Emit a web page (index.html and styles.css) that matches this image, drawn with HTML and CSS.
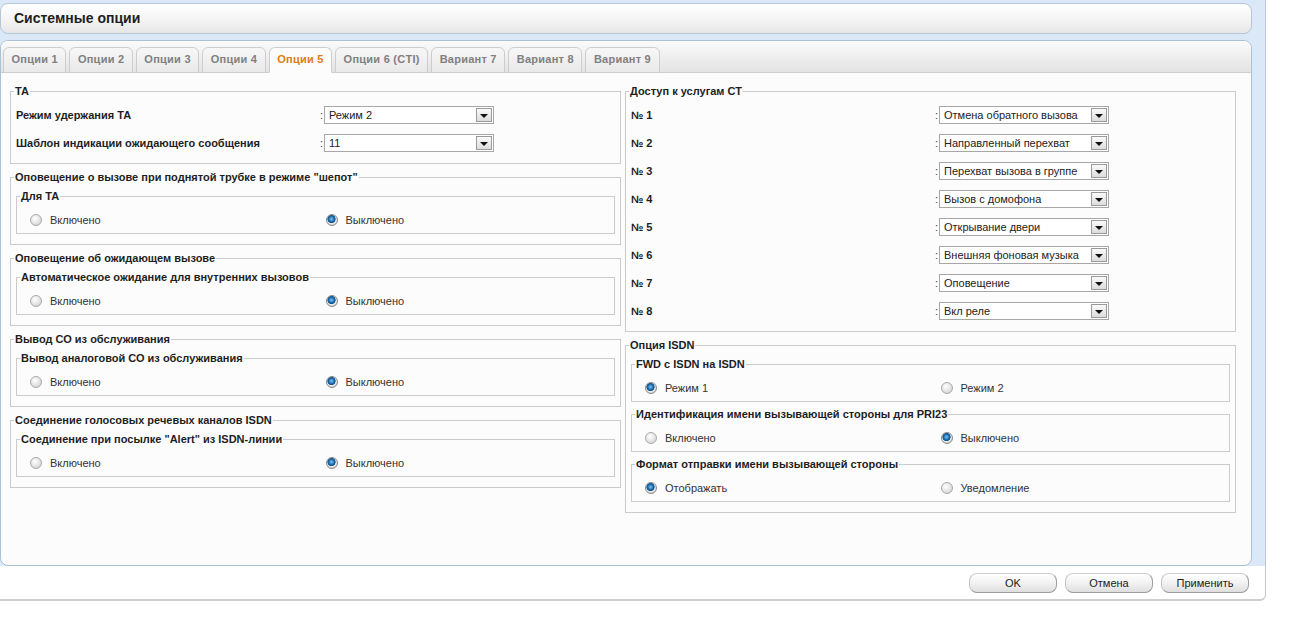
FILE: index.html
```html
<!DOCTYPE html>
<html lang="ru">
<head>
  <meta charset="UTF-8" />
  <title>Системные опции</title>
  <link rel="stylesheet" href="styles.css">
</head>
<body>
  <div class="frame">
    <div class="shell">
      <div class="titlebar">Системные опции</div>

      <div class="panel">
        <div class="tabs">
          <div class="tab">Опции 1</div>
          <div class="tab">Опции 2</div>
          <div class="tab">Опции 3</div>
          <div class="tab">Опции 4</div>
          <div class="tab active">Опции 5</div>
          <div class="tab">Опции 6 (CTI)</div>
          <div class="tab">Вариант 7</div>
          <div class="tab">Вариант 8</div>
          <div class="tab">Вариант 9</div>
        </div>

        <div class="content">
          <!-- left column -->
          <div class="col">
            <fieldset class="box rows">
              <legend>ТА</legend>
              <div class="row">
                <span class="label">Режим удержания ТА</span>
                <span class="colon">:</span>
                <div class="select"><span>Режим 2</span><i class="arrow"></i></div>
              </div>
              <div class="row">
                <span class="label">Шаблон индикации ожидающего сообщения</span>
                <span class="colon">:</span>
                <div class="select"><span>11</span><i class="arrow"></i></div>
              </div>
            </fieldset>

            <fieldset class="box">
              <legend>Оповещение о вызове при поднятой трубке в режиме "шепот"</legend>
              <fieldset class="sub">
                <legend>Для ТА</legend>
                <div class="radios">
                  <label class="opt"><span class="radio"></span>Включено</label>
                  <label class="opt"><span class="radio on"></span>Выключено</label>
                </div>
              </fieldset>
            </fieldset>

            <fieldset class="box">
              <legend>Оповещение об ожидающем вызове</legend>
              <fieldset class="sub">
                <legend>Автоматическое ожидание для внутренних вызовов</legend>
                <div class="radios">
                  <label class="opt"><span class="radio"></span>Включено</label>
                  <label class="opt"><span class="radio on"></span>Выключено</label>
                </div>
              </fieldset>
            </fieldset>

            <fieldset class="box">
              <legend>Вывод СО из обслуживания</legend>
              <fieldset class="sub">
                <legend>Вывод аналоговой СО из обслуживания</legend>
                <div class="radios">
                  <label class="opt"><span class="radio"></span>Включено</label>
                  <label class="opt"><span class="radio on"></span>Выключено</label>
                </div>
              </fieldset>
            </fieldset>

            <fieldset class="box">
              <legend>Соединение голосовых речевых каналов ISDN</legend>
              <fieldset class="sub">
                <legend>Соединение при посылке "Alert" из ISDN-линии</legend>
                <div class="radios">
                  <label class="opt"><span class="radio"></span>Включено</label>
                  <label class="opt"><span class="radio on"></span>Выключено</label>
                </div>
              </fieldset>
            </fieldset>
          </div>

          <!-- right column -->
          <div class="col">
            <fieldset class="box rows">
              <legend>Доступ к услугам СТ</legend>
              <div class="row"><span class="label">№ 1</span><span class="colon">:</span>
                <div class="select"><span>Отмена обратного вызова</span><i class="arrow"></i></div></div>
              <div class="row"><span class="label">№ 2</span><span class="colon">:</span>
                <div class="select"><span>Направленный перехват</span><i class="arrow"></i></div></div>
              <div class="row"><span class="label">№ 3</span><span class="colon">:</span>
                <div class="select"><span>Перехват вызова в группе</span><i class="arrow"></i></div></div>
              <div class="row"><span class="label">№ 4</span><span class="colon">:</span>
                <div class="select"><span>Вызов с домофона</span><i class="arrow"></i></div></div>
              <div class="row"><span class="label">№ 5</span><span class="colon">:</span>
                <div class="select"><span>Открывание двери</span><i class="arrow"></i></div></div>
              <div class="row"><span class="label">№ 6</span><span class="colon">:</span>
                <div class="select"><span>Внешняя фоновая музыка</span><i class="arrow"></i></div></div>
              <div class="row"><span class="label">№ 7</span><span class="colon">:</span>
                <div class="select"><span>Оповещение</span><i class="arrow"></i></div></div>
              <div class="row"><span class="label">№ 8</span><span class="colon">:</span>
                <div class="select"><span>Вкл реле</span><i class="arrow"></i></div></div>
            </fieldset>

            <fieldset class="box">
              <legend>Опция ISDN</legend>
              <fieldset class="sub">
                <legend>FWD с ISDN на ISDN</legend>
                <div class="radios">
                  <label class="opt"><span class="radio on"></span>Режим 1</label>
                  <label class="opt"><span class="radio"></span>Режим 2</label>
                </div>
              </fieldset>
              <fieldset class="sub">
                <legend>Идентификация имени вызывающей стороны для PRI23</legend>
                <div class="radios">
                  <label class="opt"><span class="radio"></span>Включено</label>
                  <label class="opt"><span class="radio on"></span>Выключено</label>
                </div>
              </fieldset>
              <fieldset class="sub">
                <legend>Формат отправки имени вызывающей стороны</legend>
                <div class="radios">
                  <label class="opt"><span class="radio on"></span>Отображать</label>
                  <label class="opt"><span class="radio"></span>Уведомление</label>
                </div>
              </fieldset>
            </fieldset>
          </div>
        </div>
      </div>
    </div>

    <div class="footer">
      <button class="btn">OK</button>
      <button class="btn">Отмена</button>
      <button class="btn">Применить</button>
    </div>
  </div>
</body>
</html>
```

FILE: styles.css
```css
* { box-sizing: border-box; }
body {
  margin: 0;
  font-family: "Liberation Sans", Arial, sans-serif;
  font-size: 11px;
  color: #222;
  background: #fff;
}

.frame {
  width: 1266px;
  height: 601px;
  border-right: 1px solid #c4c9cf;
  border-bottom: 2px solid #cfcfcf;
  border-bottom-right-radius: 6px;
  background: #fff;
}

.shell {
  background: #dbe8f7;
  padding: 3px 13px 0 0;
}

.titlebar {
  height: 31px;
  width: 1252px;
  border: 1px solid #b7c7d8;
  border-radius: 8px;
  background: linear-gradient(#ffffff, #f4f4f4 55%, #e6e6e6);
  font-size: 14px;
  font-weight: bold;
  color: #1e1e1e;
  line-height: 29px;
  padding-left: 13px;
}

.panel {
  margin-top: 6px;
  width: 1252px;
  height: 526px;
  border: 1px solid #a9c2d6;
  border-radius: 8px;
  background: #fcfcfc;
  overflow: hidden;
}

.tabs {
  height: 32px;
  display: flex;
  align-items: flex-end;
  gap: 3px;
  padding-left: 2px;
  background: linear-gradient(#fbfbfb, #e3e3e3);
  border-bottom: 1px solid #cfcfcf;
}

.tab {
  height: 26px;
  margin-bottom: -1px;
  padding: 0 7.5px;
  line-height: 22px;
  letter-spacing: 0.25px;
  font-weight: bold;
  color: #808080;
  border: 1px solid #cdcdcd;
  border-radius: 6px 6px 0 0;
  background: linear-gradient(#f7f7f7, #e9e9e9);
}

.tab.active {
  color: #e07b12;
  background: #fcfcfc;
  border-bottom-color: #fcfcfc;
}

.content {
  display: flex;
  gap: 4px;
  padding: 12px 0 0 9px;
}

.col {
  width: 611px;
}

fieldset {
  margin: 0;
  min-width: 0;
}

legend {
  font-weight: bold;
  line-height: 13px;
  padding: 0 1px;
  color: #1e1e1e;
}

.box {
  border: 1px solid #cbcbcb;
  padding: 0 3px 10px 3px;
  margin-bottom: 7px;
}

.box.rows {
  padding-top: 3px;
  padding-bottom: 6px;
}

.sub {
  border: 1px solid #cbcbcb;
  margin: 6px 2px 0 2px;
  padding: 7px 3px 3px 3px;
}

.row {
  height: 28px;
  display: flex;
  align-items: center;
  padding-left: 2px;
}

.label {
  width: 304px;
  font-weight: bold;
  color: #1e1e1e;
}

.colon {
  width: 4px;
  color: #444;
}

.select {
  width: 170px;
  height: 18px;
  border: 1px solid #a7a7a7;
  background: #fff;
  display: flex;
  align-items: center;
  justify-content: space-between;
  padding: 0 1px 0 4px;
  color: #222;
}

.arrow {
  width: 16px;
  height: 14px;
  border: 1px solid #9a9a9a;
  background: linear-gradient(#fafafa, #dcdcdc);
  position: relative;
}

.arrow::after {
  content: "";
  position: absolute;
  left: 3px;
  top: 5px;
  border-left: 4px solid transparent;
  border-right: 4px solid transparent;
  border-top: 4px solid #111;
}

.radios {
  height: 20px;
  display: flex;
  align-items: center;
}

.opt {
  width: 296px;
  padding-left: 10px;
  display: flex;
  align-items: center;
  color: #333;
}

.radio {
  width: 12px;
  height: 12px;
  border-radius: 50%;
  border: 1px solid #a9a9a9;
  background: radial-gradient(circle at 40% 35%, #ffffff, #d6d6d6 80%);
  margin-right: 8px;
  flex: none;
}

.radio.on {
  border-color: #8a8a8a;
  background: radial-gradient(circle at 45% 40%, #8cc3ee 0, #1d73b5 2.5px, #0e4f86 3.8px, #f0f0f0 4.4px, #d0d0d0 6px);
}

.footer {
  display: flex;
  justify-content: flex-end;
  gap: 8px;
  padding: 7px 16px 0 0;
}

.btn {
  width: 88px;
  height: 20px;
  font-family: "Liberation Sans", Arial, sans-serif;
  font-size: 11px;
  color: #222;
  border: 1px solid #9d9d9d;
  border-left-color: #c4c4c4;
  border-top-color: #d0d0d0;
  border-radius: 8px;
  background: linear-gradient(#ffffff, #f2f2f2 50%, #dedede);
  padding: 0;
}
```
